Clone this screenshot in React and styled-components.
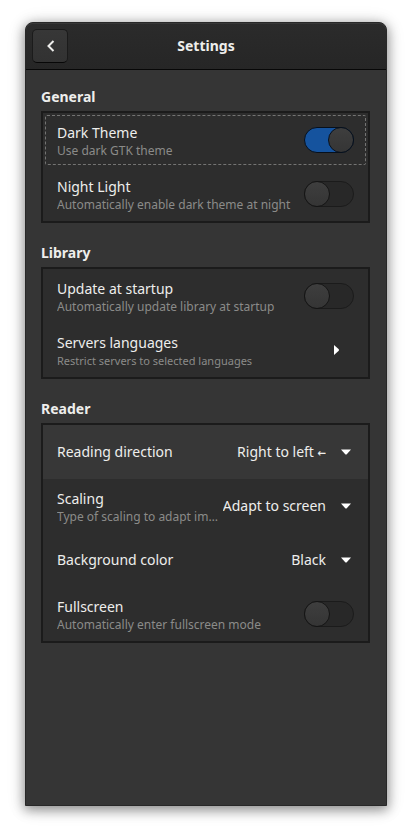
import React, { useId } from "react";
import styled, { createGlobalStyle } from "styled-components";

const GlobalStyle = createGlobalStyle`
  *, *::before, *::after { box-sizing: border-box; }
  html, body { margin: 0; background: #fff; }
  body, button, select, input {
    font-family: "Noto Sans", "DejaVu Sans Mono", sans-serif;
    font-size: 14px;
  }
`;

const Desktop = styled.div`
  display: flex;
  min-height: 100vh;
  padding: 22px 25px 28px;
`;

const Window = styled.main`
  flex: 1;
  min-width: 0;
  background: #353535;
  border: 1px solid #282828;
  border-radius: 8px 8px 0 0;
  box-shadow: 0 3px 12px 1px rgba(0, 0, 0, 0.4), 0 2px 20px rgba(0, 0, 0, 0.12);
  color: #eeeeec;
`;

const HeaderBar = styled.header`
  display: grid;
  grid-template-columns: 36px 1fr 36px;
  align-items: center;
  height: 47px;
  padding: 0 6px;
  background: linear-gradient(to top, #262626, #2b2b2b);
  border-bottom: 1px solid #070707;
  border-radius: 7px 7px 0 0;
  box-shadow: inset 0 1px #383838;
`;

const BackButton = styled.button`
  display: flex;
  align-items: center;
  justify-content: center;
  width: 36px;
  height: 34px;
  padding: 0;
  color: #eeeeec;
  background: linear-gradient(to top, #323232, #373737);
  border: 1px solid #1b1b1b;
  border-bottom-color: #070707;
  border-radius: 5px;
`;

const Title = styled.h1`
  margin: 0;
  font-size: 14px;
  line-height: 20px;
  font-weight: 700;
  text-align: center;
`;

const Content = styled.div`
  display: flex;
  flex-direction: column;
  gap: 20px;
  padding: 17px 16px 32px 15px;
`;

const GroupTitle = styled.h2`
  margin: 0 0 4px;
  font-size: 14px;
  line-height: 20px;
  font-weight: 700;
`;

const List = styled.div`
  background: #2d2d2d;
  border: 2px solid #1b1b1b;
`;

const Row = styled.div`
  display: flex;
  align-items: center;
  justify-content: space-between;
  gap: 4px;
  width: 100%;
  height: 54px;
  padding: 0 14px;
  background: ${(p) => (p.$hover ? "#373737" : "transparent")};
  outline: ${(p) => (p.$focused ? "1px dashed #747473" : "none")};
  outline-offset: -3px;
  border: 0;
  border-radius: ${(p) => (p.$focused ? "4px" : "0")};
  color: inherit;
  text-align: left;
`;

const Labels = styled.div`
  display: flex;
  flex-direction: column;
  flex: 1;
  min-width: 0;
  padding-top: ${(p) => (p.$single ? "0" : "1px")};
`;

const Name = styled.label`
  font-size: 14px;
  line-height: 20px;
  white-space: nowrap;
`;

const Description = styled.span`
  overflow: hidden;
  font-size: ${(p) => (p.$small ? "11px" : "12px")};
  line-height: 16px;
  color: #8b8b89;
  white-space: nowrap;
  text-overflow: ellipsis;
`;

const Switch = styled.input`
  appearance: none;
  flex: none;
  display: flex;
  width: 50px;
  height: 26px;
  margin: 0;
  background: #282828;
  border: 1px solid #1b1b1b;
  border-radius: 13px;

  &::before {
    content: "";
    width: 26px;
    height: 26px;
    margin: -1px;
    background: linear-gradient(to top, #353535, #3e3e3e);
    border: 1px solid #151515;
    border-radius: 50%;
  }

  &:checked {
    justify-content: flex-end;
    background: #15539e;
    border-color: #07101c;
  }

  &:checked::before { border-color: #07101c; }
`;

const Dropdown = styled.div`
  display: grid;
  grid-template-columns: auto 10px;
  align-items: center;
  gap: 15px;
  padding-right: 3px;
`;

const Select = styled.select`
  appearance: none;
  field-sizing: content;
  grid-area: 1 / 1 / 2 / 3;
  padding: 0 25px 0 0;
  color: inherit;
  background: transparent;
  border: 0;
  line-height: 20px;
`;

const DownArrow = styled.svg`
  grid-area: 1 / 2;
  width: 10px;
  height: 6px;
  pointer-events: none;
`;

const NextArrow = styled.svg`
  flex: none;
  width: 5px;
  height: 10px;
  margin-right: 15px;
`;

function Group({ title, children }) {
  return (
    <section>
      <GroupTitle>{title}</GroupTitle>
      <List>{children}</List>
    </section>
  );
}

function SwitchRow({ name, description, on, focused }) {
  const id = useId();
  return (
    <Row $focused={focused}>
      <Labels>
        <Name htmlFor={id}>{name}</Name>
        <Description>{description}</Description>
      </Labels>
      <Switch id={id} type="checkbox" role="switch" defaultChecked={on} />
    </Row>
  );
}

function SelectRow({ name, description, value, hover }) {
  const id = useId();
  return (
    <Row $hover={hover}>
      <Labels $single={!description}>
        <Name htmlFor={id}>{name}</Name>
        {description && <Description>{description}</Description>}
      </Labels>
      <Dropdown>
        <Select id={id}>
          <option>{value}</option>
        </Select>
        <DownArrow viewBox="0 0 10 6" fill="#fff" aria-hidden="true">
          <path d="M0 0.5h10L6 5Q5 6 4 5z" />
        </DownArrow>
      </Dropdown>
    </Row>
  );
}

export default function App() {
  return (
    <>
      <GlobalStyle />
      <Desktop>
        <Window>
          <HeaderBar>
            <BackButton aria-label="Back">
              <svg width="16" height="16" viewBox="0 0 16 16" fill="none" aria-hidden="true">
                <path d="M11.500 3L6.500 8l5 5" stroke="currentColor" strokeWidth="2" />
              </svg>
            </BackButton>
            <Title>Settings</Title>
          </HeaderBar>
          <Content>
            <Group title="General">
              <SwitchRow name="Dark Theme" description="Use dark GTK theme" on focused />
              <SwitchRow name="Night Light" description="Automatically enable dark theme at night" />
            </Group>
            <Group title="Library">
              <SwitchRow name="Update at startup" description="Automatically update library at startup" />
              <Row as="button" type="button">
                <Labels>
                  <Name as="span">Servers languages</Name>
                  <Description $small>Restrict servers to selected languages</Description>
                </Labels>
                <NextArrow viewBox="0 0 5 10" fill="#fff" aria-hidden="true">
                  <path d="M0 0l4.500 4Q5.500 5 4.500 6L0 10z" />
                </NextArrow>
              </Row>
            </Group>
            <Group title="Reader">
              <SelectRow name="Reading direction" value="Right to left ←" hover />
              <SelectRow name="Scaling" description="Type of scaling to adapt image" value="Adapt to screen" />
              <SelectRow name="Background color" value="Black" />
              <SwitchRow name="Fullscreen" description="Automatically enter fullscreen mode" />
            </Group>
          </Content>
        </Window>
      </Desktop>
    </>
  );
}
